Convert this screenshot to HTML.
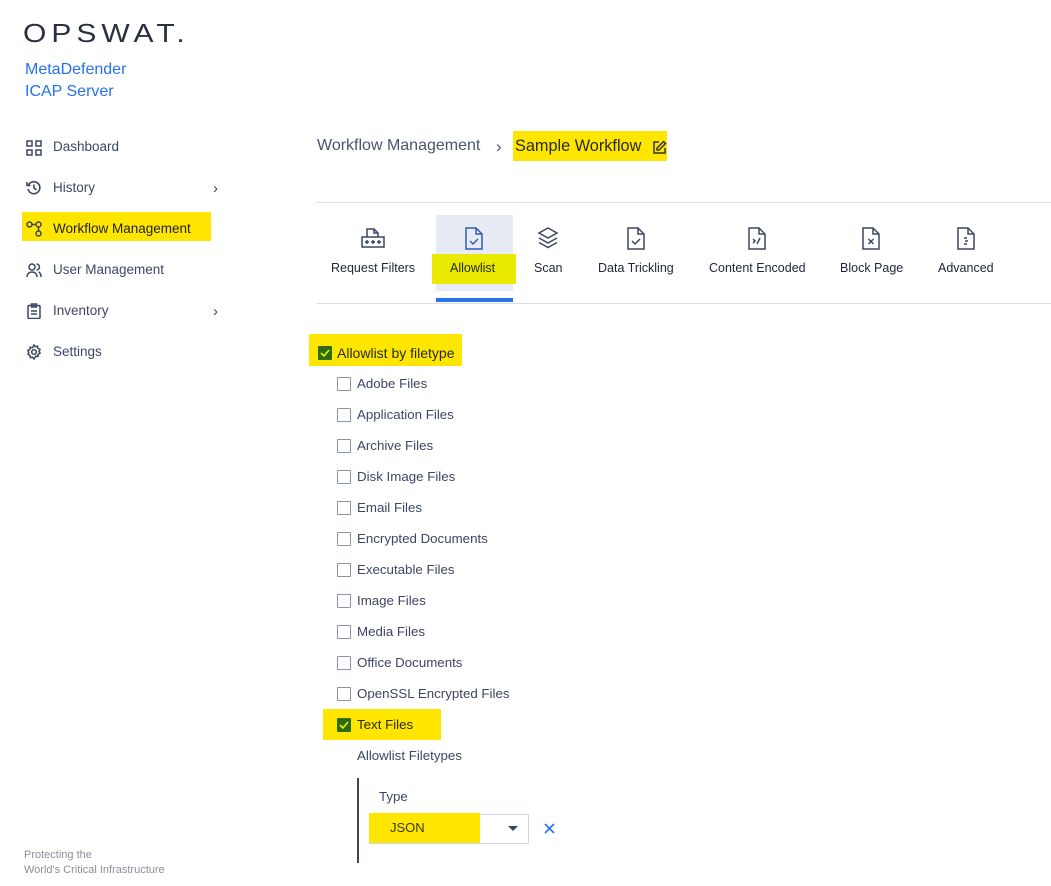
<!DOCTYPE html>
<html><head><meta charset="utf-8"><style>
*{margin:0;padding:0;box-sizing:border-box}
body{width:1051px;height:886px;background:#fff;font-family:"Liberation Sans",sans-serif;position:relative;overflow:hidden;color:#3d4663}
.a{position:absolute;white-space:nowrap}
.hl{position:absolute;background:#ffe600}
.nav{font-size:13.5px;color:#3d4663}
.ico{position:absolute}
.cb{position:absolute;width:14px;height:14px;border:1.5px solid #8a93a8;border-radius:1px;background:#fff}
.cbc{position:absolute;width:14px;height:14px;background:#2d6b0e;border-radius:1px}
.it{font-size:13.3px;color:#3d4663}
.tab{font-size:12.5px;color:#1f2533;position:absolute;top:261px}
</style></head><body>

<div class="a" style="left:23px;top:20px;font-size:30px;letter-spacing:5px;color:#2a3040;transform:scaleY(0.85);transform-origin:top left">OPSWAT.</div>
<div class="a" style="left:25px;top:59px;font-size:16px;color:#2672e8;line-height:22px">MetaDefender<br>ICAP Server</div>

<div class="hl" style="left:22px;top:212px;width:189px;height:29px"></div>
<svg class="ico" style="left:26px;top:140px" width="16" height="16" viewBox="0 0 16 16" fill="none" stroke="#3d4663" stroke-width="1.5"><rect x="1" y="1" width="5" height="5"/><rect x="10" y="1" width="5" height="5"/><rect x="1" y="10" width="5" height="5"/><rect x="10" y="10" width="5" height="5"/></svg>
<div class="a nav" style="left:53px;top:139px">Dashboard</div>
<svg class="ico" style="left:26px;top:180px" width="16" height="16" viewBox="0 0 16 16" fill="none" stroke="#3d4663" stroke-width="1.6"><path d="M2.5 5A6 6 0 1 1 2 9"/><path d="M1 2v3.5h3.5"/><path d="M8 4.5V8l2.5 2"/></svg>
<div class="a nav" style="left:53px;top:180px">History</div>
<div class="a nav" style="left:213px;top:180px;font-size:15px">›</div>
<svg class="ico" style="left:26px;top:221px" width="17" height="16" viewBox="0 0 17 16" fill="none" stroke="#3d4663" stroke-width="1.5"><circle cx="3.5" cy="3.5" r="2.5"/><circle cx="12.5" cy="3.5" r="2.5"/><circle cx="12.5" cy="12.5" r="2.5"/><path d="M6 3.5h4M12.5 6v4"/></svg>
<div class="a nav" style="left:53px;top:221px;color:#222">Workflow Management</div>
<svg class="ico" style="left:26px;top:262px" width="16" height="16" viewBox="0 0 16 16" fill="none" stroke="#3d4663" stroke-width="1.5"><circle cx="6" cy="5" r="3"/><path d="M1 15c0-3 2-5 5-5s5 2 5 5M10.5 2a3 3 0 0 1 0 6M12.5 10c1.5.5 2.5 2.5 2.5 5"/></svg>
<div class="a nav" style="left:53px;top:262px">User Management</div>
<svg class="ico" style="left:26px;top:303px" width="16" height="16" viewBox="0 0 16 16" fill="none" stroke="#3d4663" stroke-width="1.5"><rect x="2" y="2.5" width="12" height="13" rx="1"/><rect x="5.5" y="1" width="5" height="3"/><path d="M5 8h6M5 11h6"/></svg>
<div class="a nav" style="left:53px;top:303px">Inventory</div>
<div class="a nav" style="left:213px;top:303px;font-size:15px">›</div>
<svg class="ico" style="left:26px;top:344px" width="16" height="16" viewBox="0 0 16 16" fill="none" stroke="#3d4663" stroke-width="1.5"><circle cx="8" cy="8" r="2.3"/><path d="M8 1l1.3 1.8 2.2-.6.4 2.2 2.1.9-.9 2.1 1 1.8-2 1-.1 2.2-2.2-.2L8 15l-1.5-1.8-2.2.4-.3-2.2-2-1 .8-2-1-2 2-.9.3-2.2 2.3.5z"/></svg>
<div class="a nav" style="left:53px;top:344px">Settings</div>

<div class="a" style="left:24px;top:848px;font-size:11px;color:#8a8f9a;line-height:15px">Protecting the<br>World's Critical Infrastructure</div>

<div class="a" style="left:317px;top:137px;font-size:16px;color:#4a5568">Workflow Management</div>
<div class="a" style="left:496px;top:137px;font-size:17px;color:#4a5568">›</div>
<div class="hl" style="left:513px;top:131px;width:154px;height:30px"></div>
<div class="a" style="left:515px;top:137px;font-size:16.3px;color:#2a2a1a">Sample Workflow</div>
<svg class="ico" style="left:652px;top:140px" width="15" height="15" viewBox="0 0 15 15" fill="none" stroke="#333" stroke-width="1.5"><path d="M7 2H2v11h11V8"/><path d="M11.5 1.5l2 2L7 10H5V8z"/></svg>

<div class="a" style="left:317px;top:202px;width:734px;height:1px;background:#d8dde8"></div>
<div class="a" style="left:436px;top:215px;width:77px;height:76px;background:#e8ebf3"></div>
<div class="a" style="left:436px;top:298px;width:77px;height:4px;background:#2672e8"></div>
<div class="a" style="left:317px;top:303px;width:734px;height:1px;background:#d8dde8"></div>
<div class="hl" style="left:432px;top:254px;width:84px;height:30px;background:#eaea00"></div>

<svg class="ico" style="left:361px;top:226px" width="24" height="24" viewBox="0 0 24 24" fill="none" stroke="#3d4663" stroke-width="1.5"><path d="M6 11V3h7l4 4v4"/><path d="M13 3v4h4"/><rect x="1" y="11" width="22" height="10"/><path d="M4 16h4M6 14v4M10 16h4M12 14v4M16 16h4M18 14v4"/></svg>
<svg class="ico" style="left:464px;top:226px" width="20" height="25" viewBox="0 0 20 25" fill="none" stroke="#2f5db0" stroke-width="1.5"><path d="M2 2h10l6 6v15H2z"/><path d="M12 2v6h6"/><path d="M6 15l3 3 5-5"/></svg>
<svg class="ico" style="left:537px;top:226px" width="22" height="24" viewBox="0 0 22 24" fill="none" stroke="#3d4663" stroke-width="1.5"><path d="M11 2l9 5-9 5-9-5z"/><path d="M2 12l9 5 9-5M2 16.5l9 5 9-5"/></svg>
<svg class="ico" style="left:626px;top:226px" width="20" height="25" viewBox="0 0 20 25" fill="none" stroke="#3d4663" stroke-width="1.5"><path d="M2 2h10l6 6v15H2z"/><path d="M12 2v6h6"/><path d="M6 15l3 3 5-5"/></svg>
<svg class="ico" style="left:747px;top:226px" width="20" height="25" viewBox="0 0 20 25" fill="none" stroke="#3d4663" stroke-width="1.5"><path d="M2 2h10l6 6v15H2z"/><path d="M12 2v6h6"/><path d="M6 13l2 2-2 2M10 18l3-6"/></svg>
<svg class="ico" style="left:861px;top:226px" width="20" height="25" viewBox="0 0 20 25" fill="none" stroke="#3d4663" stroke-width="1.5"><path d="M2 2h10l6 6v15H2z"/><path d="M12 2v6h6"/><path d="M7.5 13l5 5M12.5 13l-5 5"/></svg>
<svg class="ico" style="left:956px;top:226px" width="20" height="25" viewBox="0 0 20 25" fill="none" stroke="#3d4663" stroke-width="1.5"><path d="M2 2h10l6 6v15H2z"/><path d="M12 2v6h6"/><path d="M8 12h3M9 15h3M8 18h3"/></svg>

<div class="tab" style="left:331px">Request Filters</div>
<div class="tab" style="left:450px;color:#1f2a10">Allowlist</div>
<div class="tab" style="left:534px">Scan</div>
<div class="tab" style="left:598px">Data Trickling</div>
<div class="tab" style="left:709px">Content Encoded</div>
<div class="tab" style="left:840px">Block Page</div>
<div class="tab" style="left:938px">Advanced</div>

<div class="hl" style="left:309px;top:334px;width:153px;height:32px"></div>
<div class="cbc" style="left:318px;top:346px"></div>
<svg class="ico" style="left:318px;top:346px" width="14" height="14"><path d="M3 7l3 3 5-6" fill="none" stroke="#e8f000" stroke-width="1.6"/></svg>
<div class="a it" style="left:337px;top:345px;color:#2a2a10;font-size:14px">Allowlist by filetype</div>

<div class="cb" style="left:337px;top:377px"></div><div class="a it" style="left:357px;top:376px">Adobe Files</div>
<div class="cb" style="left:337px;top:408px"></div><div class="a it" style="left:357px;top:407px">Application Files</div>
<div class="cb" style="left:337px;top:439px"></div><div class="a it" style="left:357px;top:438px">Archive Files</div>
<div class="cb" style="left:337px;top:470px"></div><div class="a it" style="left:357px;top:469px">Disk Image Files</div>
<div class="cb" style="left:337px;top:501px"></div><div class="a it" style="left:357px;top:500px">Email Files</div>
<div class="cb" style="left:337px;top:532px"></div><div class="a it" style="left:357px;top:531px">Encrypted Documents</div>
<div class="cb" style="left:337px;top:563px"></div><div class="a it" style="left:357px;top:562px">Executable Files</div>
<div class="cb" style="left:337px;top:594px"></div><div class="a it" style="left:357px;top:593px">Image Files</div>
<div class="cb" style="left:337px;top:625px"></div><div class="a it" style="left:357px;top:624px">Media Files</div>
<div class="cb" style="left:337px;top:656px"></div><div class="a it" style="left:357px;top:655px">Office Documents</div>
<div class="cb" style="left:337px;top:687px"></div><div class="a it" style="left:357px;top:686px">OpenSSL Encrypted Files</div>

<div class="hl" style="left:323px;top:709px;width:118px;height:31px"></div>
<div class="cbc" style="left:337px;top:718px"></div>
<svg class="ico" style="left:337px;top:718px" width="14" height="14"><path d="M3 7l3 3 5-6" fill="none" stroke="#e8f000" stroke-width="1.6"/></svg>
<div class="a it" style="left:357px;top:717px;color:#2a2a10">Text Files</div>

<div class="a it" style="left:357px;top:748px">Allowlist Filetypes</div>
<div class="a" style="left:357px;top:778px;width:2px;height:85px;background:#3d4663"></div>
<div class="a it" style="left:379px;top:789px">Type</div>
<div class="a" style="left:369px;top:814px;width:160px;height:30px;border:1px solid #cfd6e4"></div>
<div class="hl" style="left:369px;top:813px;width:111px;height:30px"></div>
<div class="a" style="left:390px;top:820px;font-size:13px;color:#3a3a10">JSON</div>
<svg class="ico" style="left:508px;top:826px" width="10" height="6"><path d="M0 0h10L5 5z" fill="#3d4663"/></svg>
<svg class="ico" style="left:544px;top:823px" width="11" height="11"><path d="M1 1l9 9M10 1l-9 9" stroke="#2672e8" stroke-width="1.6"/></svg>
</body></html>
